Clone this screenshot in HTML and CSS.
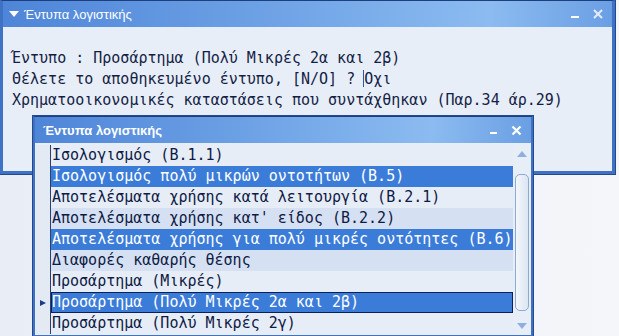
FILE: index.html
```html
<!DOCTYPE html>
<html lang="el">
<head>
    <meta charset="UTF-8">
    <title>Έντυπα λογιστικής</title>
    <link rel="stylesheet" href="styles.css">
</head>
<body>
    <div class="desktop">
        <div class="window">
            <div class="titlebar">
                <svg class="menu-arrow" width="10" height="7" viewBox="0 0 10 7"><path d="M0 0 L10 0 L5 6 Z" fill="#fff"/></svg>
                <span class="title">Έντυπα λογιστικής</span>
                <div class="controls">
                    <svg width="10" height="10" viewBox="0 0 10 10"><rect x="1" y="7" width="8" height="2" fill="#fff"/></svg>
                    <svg width="12" height="12" viewBox="0 0 12 12"><path d="M2 2 L10 10 M10 2 L2 10" stroke="#fff" stroke-width="2" opacity="0.8"/></svg>
                </div>
            </div>
            <div class="console">
                <div class="line">&nbsp;</div>
                <div class="line">Έντυπο : Προσάρτημα (Πολύ Μικρές 2α και 2β)</div>
                <div class="line">Θέλετε το αποθηκευμένο έντυπο, [Ν/Ο] ? <span class="cursor"></span>Οχι</div>
                <div class="line">Χρηματοοικονομικές καταστάσεις που συντάχθηκαν (Παρ.34 άρ.29)</div>
            </div>
        </div>

        <div class="dialog">
            <div class="titlebar small">
                <span class="title bold">Έντυπα λογιστικής</span>
                <div class="controls">
                    <svg width="10" height="10" viewBox="0 0 10 10"><rect x="1" y="7" width="7" height="2" fill="#fff"/></svg>
                    <svg width="11" height="11" viewBox="0 0 11 11"><path d="M1.5 1.5 L9.5 9.5 M9.5 1.5 L1.5 9.5" stroke="#fff" stroke-width="2.2"/></svg>
                </div>
            </div>
            <div class="list-wrap">
                <div class="list">
                    <div class="row"><span class="mark"></span><span class="text">Ισολογισμός (Β.1.1)</span></div>
                    <div class="row alt selected"><span class="mark"></span><span class="text">Ισολογισμός πολύ μικρών οντοτήτων (Β.5)</span></div>
                    <div class="row"><span class="mark"></span><span class="text">Αποτελέσματα χρήσης κατά λειτουργία (Β.2.1)</span></div>
                    <div class="row alt"><span class="mark"></span><span class="text">Αποτελέσματα χρήσης κατ' είδος (Β.2.2)</span></div>
                    <div class="row selected"><span class="mark"></span><span class="text">Αποτελέσματα χρήσης για πολύ μικρές οντότητες (Β.6)</span></div>
                    <div class="row alt"><span class="mark"></span><span class="text">Διαφορές καθαρής θέσης</span></div>
                    <div class="row"><span class="mark"></span><span class="text">Προσάρτημα (Μικρές)</span></div>
                    <div class="row alt selected current"><span class="mark"><svg width="8" height="8" viewBox="0 0 8 8"><path d="M1 1 L7 4 L1 7 Z" fill="#1b3c8a"/></svg></span><span class="text">Προσάρτημα (Πολύ Μικρές 2α και 2β)</span></div>
                    <div class="row"><span class="mark"></span><span class="text">Προσάρτημα (Πολύ Μικρές 2γ)</span></div>
                </div>
                <div class="scrollbar">
                    <svg class="arrow" width="12" height="8" viewBox="0 0 12 8"><path d="M1 7 L6 1 L11 7 Z" fill="#8fb0de"/></svg>
                    <div class="thumb"></div>
                    <svg class="arrow" width="12" height="8" viewBox="0 0 12 8"><path d="M1 1 L6 7 L11 1 Z" fill="#8fb0de"/></svg>
                </div>
            </div>
        </div>
    </div>
</body>
</html>
```

FILE: styles.css
```css
body {
    margin: 0;
    background-color: #eef1f7;
    font-family: "Liberation Sans", Arial, sans-serif;
}
.desktop {
    position: relative;
    width: 619px;
    height: 336px;
    overflow: hidden;
    background: linear-gradient(to right, #e9edf5, #f5f6fa);
}
.window {
    width: 609px;
    height: 170px;
    border: 3px solid #3f72c4;
    border-top: 1px solid #1d3f7e;
    outline: 1px solid #24498c;
    background-color: #e8eef7;
}
.titlebar {
    height: 26px;
    display: flex;
    align-items: center;
    padding: 0 8px 0 6px;
    background: linear-gradient(to right, #4e85d8, #6fa3e6 45%, #8bbbf0 80%, #6b9fe4);
    color: #fff;
}
.menu-arrow {
    margin-right: 5px;
}
.title {
    font-size: 13px;
    flex: 1;
}
.title.bold {
    font-weight: bold;
    font-size: 13px;
}
.controls {
    display: flex;
    align-items: center;
    gap: 12px;
}
.console {
    padding-left: 9px;
    font-family: "DejaVu Sans Mono", "Liberation Mono", monospace;
    font-size: 15px;
    line-height: 21px;
    color: #141e46;
}
.line {
    white-space: pre;
}
.cursor {
    display: inline-block;
    width: 1px;
    height: 17px;
    margin-left: -1px;
    vertical-align: -3px;
    background-color: #2a55b0;
}
.dialog {
    position: absolute;
    left: 33px;
    top: 116px;
    width: 496px;
    height: 218px;
    border: 2px solid #3f72c4;
    border-top: 1px solid #1d3f7e;
    outline: 1px solid #24498c;
    background-color: #e8eef7;
}
.titlebar.small {
    padding: 0 9px 0 8px;
    height: 26px;
}
.list-wrap {
    display: flex;
    padding-top: 2px;
}
.list {
    flex: 1;
}
.row {
    display: flex;
    height: 21px;
    font-family: "DejaVu Sans Mono", "Liberation Mono", monospace;
    font-size: 15px;
    line-height: 21px;
    color: #0f1a45;
    white-space: pre;
    background-color: #e6edf7;
}
.row.alt {
    background-color: #d5e1f2;
}
.mark {
    width: 15px;
    display: flex;
    align-items: center;
    justify-content: center;
    border-right: 1px solid #2b3f70;
    background-color: #e4eaf3;
}
.text {
    flex: 1;
    padding-left: 1px;
    box-sizing: border-box;
}
.row.selected .text {
    background-color: #3b7cd9;
    color: #fff;
}
.row.current .text {
    border: 1px solid #0b1f5c;
    padding-left: 0;
    line-height: 19px;
}
.scrollbar {
    width: 18px;
    height: 189px;
    display: flex;
    flex-direction: column;
    align-items: center;
    background-color: #e8eef7;
}
.arrow {
    margin: 5px 0 4px;
}
.thumb {
    width: 14px;
    flex: 1;
    margin: 12px 0 6px;
    border: 1px solid #8ea9d2;
    border-radius: 5px;
    box-sizing: border-box;
    background: linear-gradient(to right, #f4f7fc, #dbe5f3);
}
```
